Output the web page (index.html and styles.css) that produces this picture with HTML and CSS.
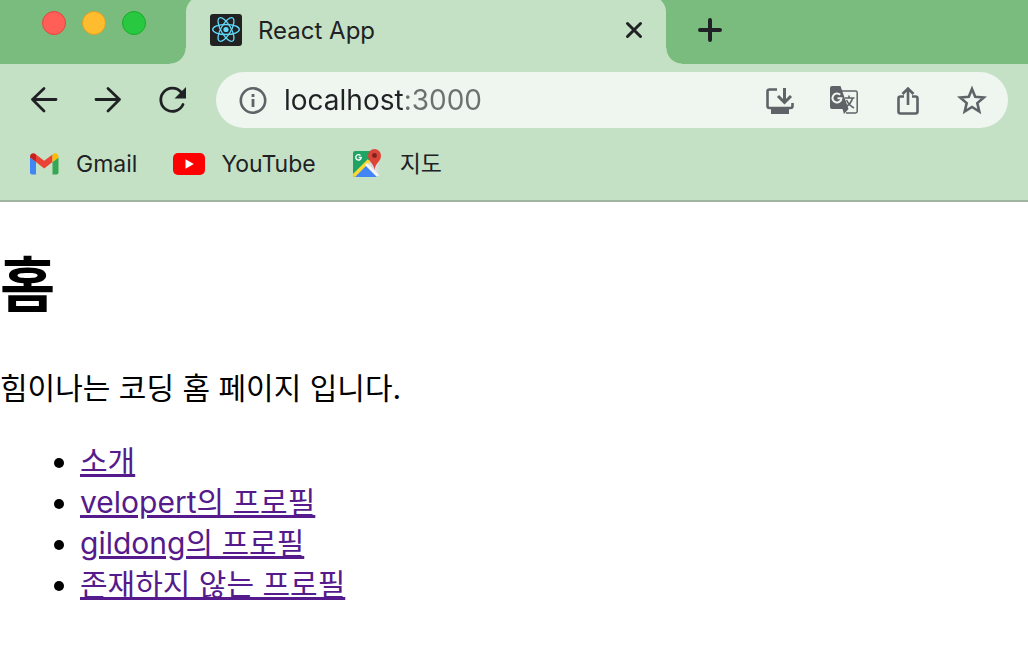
FILE: index.html
```html
<!DOCTYPE html>
<html lang="ko">
<head>
    <meta charset="UTF-8">
    <meta name="viewport" content="width=device-width, initial-scale=1.0">
    <title>React App</title>
    <link rel="stylesheet" href="styles.css">
</head>
<body>
    <header class="browser">
        <div class="tab-strip">
            <div class="window-buttons">
                <button class="dot red" aria-label="Close window"></button>
                <button class="dot yellow" aria-label="Minimize window"></button>
                <button class="dot green" aria-label="Zoom window"></button>
            </div>
            <div class="tab">
                <svg class="favicon" width="32" height="32" viewBox="0 0 32 32">
                    <rect width="32" height="32" rx="3" fill="#222"/>
                    <circle cx="16" cy="15.500" r="2.600" fill="#61dafb"/>
                    <g fill="none" stroke="#61dafb" stroke-width="1.300">
                        <ellipse cx="16" cy="15.500" rx="13.300" ry="5"/>
                        <ellipse cx="16" cy="15.500" rx="13.300" ry="5" transform="rotate(60 16 15.500)"/>
                        <ellipse cx="16" cy="15.500" rx="13.300" ry="5" transform="rotate(120 16 15.500)"/>
                    </g>
                </svg>
                <span class="tab-title">React App</span>
                <button class="icon-button" aria-label="Close tab">
                    <svg width="20" height="20" viewBox="0 0 20 20" fill="none" stroke="#202124" stroke-width="3" stroke-linecap="round">
                        <path d="M3.500 3.500l13 13M16.500 3.500l-13 13"/>
                    </svg>
                </button>
            </div>
            <button class="icon-button new-tab" aria-label="New tab">
                <svg width="24" height="24" viewBox="0 0 24 24" fill="none" stroke="#202124" stroke-width="4" stroke-linecap="round">
                    <path d="M12 2v20M2 12h20"/>
                </svg>
            </button>
        </div>

        <div class="toolbar">
            <nav class="nav-buttons">
                <button class="icon-button" aria-label="Back">
                    <svg width="32" height="32" viewBox="0 0 32 32" fill="none" stroke="#202124" stroke-width="2.800" stroke-linecap="round" stroke-linejoin="round">
                        <path d="M28 15.500H4.500M16 4.500L4.500 15.500 16 27"/>
                    </svg>
                </button>
                <button class="icon-button" aria-label="Forward">
                    <svg width="32" height="32" viewBox="0 0 32 32" fill="none" stroke="#202124" stroke-width="2.800" stroke-linecap="round" stroke-linejoin="round">
                        <path d="M4 15.500h23.500M16 4.500l11.500 11L16 27"/>
                    </svg>
                </button>
                <button class="icon-button" aria-label="Reload">
                    <svg width="32" height="32" viewBox="0 0 32 32">
                        <path d="M27 20.500a11.600 11.600 0 1 1-2-12.500" fill="none" stroke="#202124" stroke-width="2.800" stroke-linecap="round"/>
                        <path d="M30 3v11.500H18.500z" fill="#202124"/>
                    </svg>
                </button>
            </nav>
            <div class="omnibox">
                <button class="icon-button" aria-label="Site information">
                    <svg width="30" height="30" viewBox="0 0 30 30">
                        <circle cx="15" cy="15.500" r="12.200" fill="none" stroke="#5f6368" stroke-width="2.600"/>
                        <path d="M13.600 9h2.800v3h-2.800zM13.600 14h2.800v8h-2.800z" fill="#5f6368"/>
                    </svg>
                </button>
                <input class="address" type="text" value="localhost:3000" aria-label="Address" spellcheck="false">
                <div class="page-actions">
                    <button class="icon-button" aria-label="Install app">
                        <svg width="32" height="32" viewBox="0 0 32 32" fill="none" stroke="#5f6368" stroke-width="2.600">
                            <path d="M13 5.500H5.500a2 2 0 0 0-2 2v14.500a2 2 0 0 0 2 2h21a2 2 0 0 0 2-2V19"/>
                            <path d="M20.500 4V18M14 12l6.500 6.500L27 12" stroke-width="3"/>
                            <path d="M7 25h18v5H7z" fill="#5f6368" stroke="none"/>
                        </svg>
                    </button>
                    <button class="icon-button" aria-label="Translate this page">
                        <svg width="32" height="32" viewBox="0 0 32 32" fill="none">
                            <path d="M14 7h13.500a1.700 1.700 0 0 1 1.700 1.700v18.600a1.700 1.700 0 0 1-1.700 1.700H18" stroke="#5f6368" stroke-width="1.500"/>
                            <path d="M4 2h8.500L20.500 25l-4.500 5-1.500-5H4a2 2 0 0 1-2-2V4a2 2 0 0 1 2-2z" fill="#5f6368"/>
                            <path d="M12.200 10.800a4.500 4.500 0 1 0 1.300 3.400H9.500" stroke="#eef6ef" stroke-width="2"/>
                            <path d="M17 14h9.500M21 11.500V14M24.500 14c-.8 4-3.500 7-7 9M18.500 16c1.500 3.500 4 6 7.500 8" stroke="#5f6368" stroke-width="1.600"/>
                        </svg>
                    </button>
                    <button class="icon-button" aria-label="Share this page">
                        <svg width="32" height="32" viewBox="0 0 32 32" fill="none" stroke="#5f6368" stroke-width="2.600">
                            <path d="M12 12.500H8.500a2 2 0 0 0-2 2v13a2 2 0 0 0 2 2h15a2 2 0 0 0 2-2v-13a2 2 0 0 0-2-2H20"/>
                            <path d="M16 21V5M10.500 10L16 4.500 21.500 10"/>
                        </svg>
                    </button>
                    <button class="icon-button" aria-label="Bookmark this page">
                        <svg width="32" height="32" viewBox="0 0 32 32" fill="none" stroke="#5f6368" stroke-width="2.600">
                            <path d="M16 5l3.200 7.800 8.600.7-6.500 5.600 2 8.400L16 23l-7.300 4.500 2-8.400-6.500-5.600 8.600-.7z"/>
                        </svg>
                    </button>
                </div>
            </div>
        </div>

        <nav class="bookmarks">
            <a class="bookmark" href="#">
                <svg width="32" height="32" viewBox="0 0 32 32">
                    <path d="M2 9.500l6 4.500v12.500H4a2 2 0 0 1-2-2z" fill="#4285f4"/>
                    <path d="M24.500 14l6-4.500v15a2 2 0 0 1-2 2h-4z" fill="#34a853"/>
                    <path d="M8 6.500l8.200 6.200 8.300-6.200V14l-8.300 6.500L8 14z" fill="#ea4335"/>
                    <path d="M2 8.500C2 5.500 5.500 4 8 6.500V14l-6-4.500z" fill="#c5221f"/>
                    <path d="M24.500 6.500c2.500-2.500 6-1 6 2v1l-6 4.500z" fill="#fbbc04"/>
                </svg>
                <span>Gmail</span>
            </a>
            <a class="bookmark" href="#">
                <svg width="32" height="32" viewBox="0 0 32 32">
                    <rect y="5" width="32" height="22" rx="5" fill="#f00"/>
                    <path d="M12.500 11.200v9.600l8.300-4.800z" fill="#fff"/>
                </svg>
                <span>YouTube</span>
            </a>
            <a class="bookmark" href="#">
                <svg width="32" height="32" viewBox="0 0 32 32" fill="none">
                    <path d="M3 3h20v24a2 2 0 0 1-2 2H3a2 2 0 0 1-2-2V5a2 2 0 0 1 2-2z" fill="#1fa463"/>
                    <path d="M12 17L26.500 3v24a2 2 0 0 1-2 2z" fill="#dadce0"/>
                    <path d="M2 29l12-12 12 12z" fill="#4285f4"/>
                    <path d="M1.500 28L17 12.500" stroke="#fdd835" stroke-width="3.500"/>
                    <path d="M14 16l12 12" stroke="#f5f5f5" stroke-width="3"/>
                    <path d="M8.500 7.500a2.700 2.700 0 1 0 .7 2H6.700" stroke="#fff" stroke-width="1.400"/>
                    <path d="M22.500 22c-.5-7-6.500-8-6.500-14.500a6.500 6.500 0 0 1 13 0C29 14 23 15 22.500 22z" fill="#db4437"/>
                    <circle cx="22.500" cy="7.500" r="2.400" fill="#7b231e"/>
                </svg>
                <span>지도</span>
            </a>
        </nav>
    </header>

    <main class="page">
        <h1>홈</h1>
        <p>힘이나는 코딩 홈 페이지 입니다.</p>
        <ul>
            <li><a href="#">소개</a></li>
            <li><a href="#">velopert의 프로필</a></li>
            <li><a href="#">gildong의 프로필</a></li>
            <li><a href="#">존재하지 않는 프로필</a></li>
        </ul>
    </main>
</body>
</html>
```
FILE: styles.css
```css
body {
    margin: 0;
    background-color: #fff;
    color: #000;
    font-family: Inter, "Noto Sans CJK KR", sans-serif;
}
svg {
    display: block;
    flex: none;
}

/* Browser window */
.browser {
    background-color: #c5e1c5;
    border-bottom: 2px solid #a0b5a0;
    color: #202124;
}
.icon-button {
    padding: 0;
    border: 0;
    background: none;
    cursor: pointer;
}
.tab-strip {
    display: flex;
    height: 64px;
    background-color: #7abc7d;
    overflow: hidden;
}
.window-buttons {
    display: flex;
    gap: 16px;
    padding: 11px 40px 0 42px;
}
.dot {
    box-sizing: border-box;
    width: 24px;
    height: 24px;
    padding: 0;
    border: 1px solid;
    border-radius: 50%;
}
.red {
    background-color: #ff5f57;
    border-color: #e2463f;
}
.yellow {
    background-color: #febc2e;
    border-color: #e0a023;
}
.green {
    background-color: #28c840;
    border-color: #1aab29;
}
.tab {
    position: relative;
    display: flex;
    align-items: center;
    box-sizing: border-box;
    flex: 0 1 480px;
    margin-top: -4px;
    padding: 0 22px 0 24px;
    border-radius: 16px 16px 0 0;
    background-color: #c5e1c5;
}
/* curved feet of the active tab */
.tab::before,
.tab::after {
    content: "";
    position: absolute;
    bottom: 0;
    width: 16px;
    height: 16px;
}
.tab::before {
    right: 100%;
    background: radial-gradient(circle at 0 0, transparent 15px, #c5e1c5 16px);
}
.tab::after {
    left: 100%;
    background: radial-gradient(circle at 100% 0, transparent 15px, #c5e1c5 16px);
}
.tab-title {
    flex: 1;
    margin-left: 16px;
    font-size: 24px;
}
.new-tab {
    height: 60px;
    margin-left: 32px;
}
.toolbar {
    display: flex;
    align-items: center;
    padding: 8px 20px 8px 28px;
}
.nav-buttons {
    display: flex;
    gap: 32px;
    margin-right: 28px;
}
.omnibox {
    display: flex;
    align-items: center;
    flex: 1;
    min-width: 0;
    height: 56px;
    padding: 0 20px 0 22px;
    border-radius: 28px;
    background-color: #eef6ef;
}
.address {
    flex: 1;
    min-width: 0;
    margin-left: 16px;
    padding: 0;
    border: 0;
    outline: 0;
    /* host is dark, port is grey */
    background: linear-gradient(to right, #202124 120px, #6b716c 120px);
    -webkit-background-clip: text;
    background-clip: text;
    color: transparent;
    font-family: inherit;
    font-size: 28px;
    line-height: 40px;
}
.page-actions {
    display: flex;
    gap: 32px;
}
.bookmarks {
    display: flex;
    gap: 36px;
    padding: 12px 28px 20px;
}
.bookmark {
    display: flex;
    align-items: center;
    gap: 16px;
    color: #202124;
    font-size: 23px;
    line-height: 32px;
    text-decoration: none;
}
.bookmark span {
    height: 32px;
}

/* Page content */
.page {
    font-size: 30px;
    line-height: 41px;
}
.page h1 {
    margin: 43px 0;
    font-size: 60px;
    line-height: 80px;
}
.page p {
    margin: 32px 0;
}
.page ul {
    margin: 32px 0;
    padding-left: 80px;
}
.page li a {
    color: #551a8b;
    text-decoration-thickness: 3px;
}
```
